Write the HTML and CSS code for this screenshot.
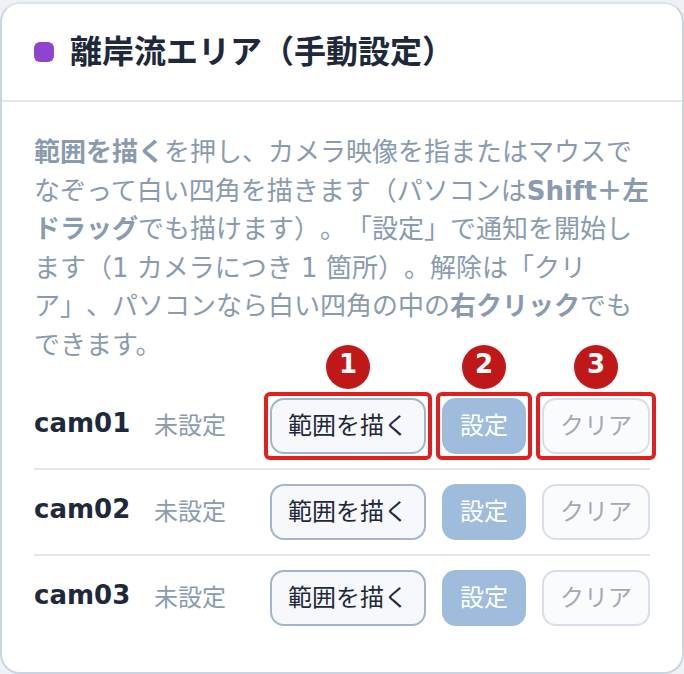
FILE: index.html
```html
<!DOCTYPE html>
<html lang="ja">
<head>
    <meta charset="UTF-8">
    <title>離岸流エリア（手動設定）</title>
    <link rel="stylesheet" href="styles.css">
</head>
<body>

    <div class="card">
        <div class="card-header">
            <span class="dot"></span>
            <h2 class="card-title">離岸流エリア（手動設定）</h2>
        </div>
        <div class="card-body">
            <p class="help"><b>範囲を描く</b>を押し、カメラ映像を指またはマウスでなぞって白い四角を描きます（パソコンは<b>Shift＋左ドラッグ</b>でも描けます）。「設定」で通知を開始します（1 カメラにつき 1 箇所）。解除は「クリア」、パソコンなら白い四角の中の<b>右クリック</b>でもできます。</p>

            <div class="row">
                <span class="cam">cam01</span>
                <span class="state">未設定</span>
                <div class="actions">
                    <button class="btn btn-draw marked" data-step="1">範囲を描く</button>
                    <button class="btn btn-set marked" data-step="2">設定</button>
                    <button class="btn btn-clear marked" data-step="3">クリア</button>
                </div>
            </div>
            <div class="row">
                <span class="cam">cam02</span>
                <span class="state">未設定</span>
                <div class="actions">
                    <button class="btn btn-draw">範囲を描く</button>
                    <button class="btn btn-set">設定</button>
                    <button class="btn btn-clear">クリア</button>
                </div>
            </div>
            <div class="row">
                <span class="cam">cam03</span>
                <span class="state">未設定</span>
                <div class="actions">
                    <button class="btn btn-draw">範囲を描く</button>
                    <button class="btn btn-set">設定</button>
                    <button class="btn btn-clear">クリア</button>
                </div>
            </div>
        </div>
    </div>

</body>
</html>
```

FILE: styles.css
```css
* {
    box-sizing: border-box;
    margin: 0;
    padding: 0;
}

body {
    font-family: "DejaVu Sans", "Noto Sans CJK JP", sans-serif;
    text-spacing-trim: space-all;
    background-color: #eef2f7;
    width: 684px;
    height: 674px;
    overflow: hidden;
}

.card {
    height: 672px;
    margin-top: 2px;
    background-color: #fff;
    border: 2px solid #cbd5e1;
    border-top-color: #dbe3ed;
    border-radius: 20px;
}

.card-header {
    display: flex;
    align-items: center;
    gap: 16px;
    height: 98px;
    padding: 0 32px;
    border-bottom: 2px solid #e2e8f0;
}

.dot {
    width: 20px;
    height: 20px;
    border-radius: 6px;
    background-color: #8e44cc;
}

.card-title {
    font-size: 32px;
    font-weight: 700;
    color: #1e293b;
    margin-top: -6px;
}

.card-body {
    padding: 31px 32px 0;
}

.help {
    font-size: 26px;
    line-height: 38.6px;
    color: #8a9bb0;
    margin-bottom: 19px;
}

.help b {
    font-weight: 700;
}

.row {
    display: flex;
    align-items: center;
    height: 86px;
    border-bottom: 2px solid #e2e8f0;
}

.row:last-child {
    border-bottom-color: transparent;
}

.cam {
    width: 120px;
    font-size: 26px;
    font-weight: 700;
    color: #1e293b;
    margin-top: -5px;
}

.state {
    font-size: 24px;
    color: #8a9bb0;
    margin-top: -4px;
}

.actions {
    display: flex;
    gap: 16px;
    margin-left: auto;
}

.btn {
    position: relative;
    height: 56px;
    padding-bottom: 4px;
    font-family: inherit;
    font-size: 24px;
    border-radius: 14px;
    border: 2px solid transparent;
}

.btn-draw {
    width: 156px;
    color: #1e293b;
    background-color: #f6f8fc;
    border-color: #a3b5cc;
}

.btn-set {
    width: 84px;
    color: #fff;
    background-color: #a0bcdc;
}

.btn-clear {
    width: 108px;
    color: #a3aab5;
    background-color: #fafbfd;
    border-color: #d8dfe9;
}

/* Red frame and number over the first row */
.marked::before {
    content: "";
    position: absolute;
    inset: -8px;
    border: 4px solid #e02020;
    border-radius: 6px;
}

.marked::after {
    content: attr(data-step);
    position: absolute;
    top: -55px;
    left: 50%;
    width: 44px;
    height: 44px;
    margin-left: -22px;
    border-radius: 50%;
    background-color: #c01818;
    color: #fff;
    font-size: 26px;
    font-weight: 700;
    line-height: 38px;
    text-align: center;
}
```
